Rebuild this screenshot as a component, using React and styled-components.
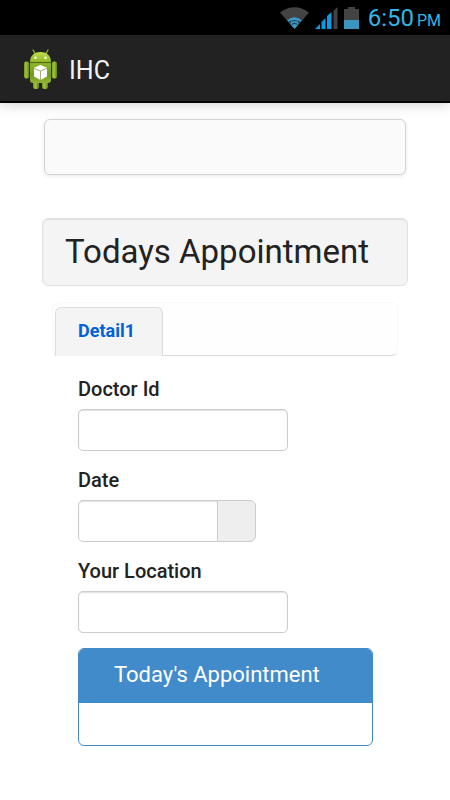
import React from 'react';
import styled, { createGlobalStyle } from 'styled-components';

const GlobalStyle = createGlobalStyle`
  *, *::before, *::after {
    box-sizing: border-box;
  }

  body {
    margin: 0;
    background-color: #fff;
    color: #222;
    font-family: Roboto, "Liberation Sans", sans-serif;
  }
`;

const StatusBar = styled.div`
  display: flex;
  justify-content: flex-end;
  align-items: center;
  gap: 6px;
  height: 35px;
  padding: 0 9px 0 0;
  background-color: #000;
  color: #33b5e5;
`;

const Clock = styled.time`
  display: flex;
  align-items: baseline;
  gap: 3px;
  margin-left: 3px;
  padding-top: 4px;
  font-size: 24px;
  line-height: 32px;
`;

const Meridiem = styled.span`
  font-size: 16px;
`;

const ActionBar = styled.header`
  display: flex;
  align-items: center;
  gap: 11px;
  height: 68px;
  padding: 3px 23px 0;
  background-color: #222;
  border-bottom: 2px solid #000;
  box-shadow: 0 2px 12px rgba(0, 0, 0, 0.18);
`;

const AppTitle = styled.h1`
  margin: 0;
  padding-top: 2px;
  color: #f3f3f3;
  font-size: 25px;
  font-weight: 400;
  line-height: 32px;
`;

const Page = styled.main`
  padding: 16px 42px;
`;

const Navbar = styled.nav`
  height: 56px;
  margin: 0 2px 43px;
  background-color: #fafafa;
  border: 1px solid #d4d4d4;
  border-radius: 6px;
  box-shadow: 0 1px 4px rgba(0, 0, 0, 0.1);
`;

const Well = styled.div`
  margin-bottom: 16px;
  padding: 11px 22px;
  background-color: #f4f4f4;
  border: 1px solid #e1e1e1;
  border-radius: 6px;
  box-shadow: inset 0 1px 1px rgba(0, 0, 0, 0.08);
`;

const Heading = styled.h2`
  margin: 0;
  font-size: 33px;
  font-weight: 400;
  line-height: 44px;
  white-space: nowrap;
`;

const TabPane = styled.section`
  margin: 0 10px;
`;

const TabList = styled.div`
  display: flex;
  padding: 4px 2px 0;
  background-color: #fefefe;
  border: 1px solid;
  border-color: #fafafa #f8f8f8 #d9d9d9;
  border-radius: 7px;
`;

const Tab = styled.button`
  height: 49px;
  margin-bottom: -1px;
  padding: 0 27px 4px 22px;
  background-color: #f4f4f4;
  border: 1px solid #ddd;
  border-bottom: 0;
  border-radius: 6px 6px 0 0;
  color: #0062d6;
  font-family: inherit;
  font-size: 18px;
  font-weight: 700;
`;

const Form = styled.form`
  padding: 20px 25px 0 26px;
`;

const Field = styled.div`
  margin-bottom: 16px;

  &:last-of-type {
    margin-bottom: 15px;
  }
`;

const Label = styled.label`
  display: block;
  margin-bottom: 7px;
  color: #222;
  font-size: 20px;
  font-weight: 500;
  line-height: 26px;
`;

const TextInput = styled.input`
  display: block;
  width: ${({ $width }) => $width};
  height: 42px;
  padding: 6px 8px;
  background-color: #fff;
  border: 1px solid #ccc;
  border-radius: ${({ $grouped }) => ($grouped ? '5px 0 0 5px' : '5px')};
  box-shadow: inset 0 1px 1px rgba(0, 0, 0, 0.12);
  font: inherit;
  font-size: 19px;
`;

const InputGroup = styled.div`
  display: flex;
`;

const DateButton = styled.button`
  width: 39px;
  height: 42px;
  margin-left: -1px;
  padding: 0;
  background-color: #eee;
  border: 1px solid #ccc;
  border-radius: 0 6px 6px 0;
`;

const Panel = styled.section`
  border: 1px solid #428bca;
  border-radius: 6px;
  overflow: hidden;
`;

const PanelTitle = styled.h3`
  margin: 0;
  padding: 12px 35px 14px;
  background-color: #428bca;
  color: #fff;
  font-size: 22px;
  font-weight: 400;
  line-height: 28px;
  white-space: nowrap;
`;

const PanelBody = styled.div`
  height: 42px;
`;

const WifiIcon = () => (
  <svg width="29" height="22" viewBox="0 0 29 22" aria-hidden="true">
    <path d="M0 5.5 Q14.5 -5 29 5.5 L14.5 22 Z" fill="#434343" />
    <path d="M7.2 13.2 Q14.5 7.4 21.8 13.2 L14.5 22 Z" fill="#3b9bc6" />
    <path d="M8.5 14.6 L11.5 13.2 L10.5 16.8 Z M20.5 14.6 L17.5 13.2 L18.5 16.8 Z" fill="#17495f" />
    <path d="M11.8 14.2 Q14.5 12.8 17.2 14.2" fill="none" stroke="#17495f" strokeWidth="1.2" />
    <path d="M11.8 17.4 L14.5 16.2 L17.2 17.4" fill="none" stroke="#17495f" strokeWidth="1.2" />
  </svg>
);

const SignalIcon = () => (
  <svg width="23" height="22" viewBox="0 0 23 22" aria-hidden="true">
    <path d="M0 22 L5 17 V22 Z" fill="#0a9be6" />
    <path d="M6.5 22 V15 L10.5 11 V22 Z" fill="#0a9be6" />
    <path d="M12 22 V9 L16.5 5 V22 Z" fill="#0a9be6" />
    <path d="M18.5 22 V4 L22.5 0 V22 Z" fill="#434343" />
  </svg>
);

const BatteryIcon = () => (
  <svg width="15" height="22" viewBox="0 0 15 22" aria-hidden="true">
    <path d="M0 2 H4 V0 H11 V2 H15 V13 H0 Z" fill="#434343" />
    <path d="M0 13 H15 V22 H0 Z" fill="#3b96bf" />
  </svg>
);

const AndroidIcon = () => (
  <svg width="35" height="41" viewBox="0 0 35 41" aria-hidden="true">
    <defs>
      <linearGradient id="head" x1="0" y1="0" x2="0" y2="1">
        <stop offset="0" stopColor="#c3df4b" />
        <stop offset="1" stopColor="#8fb626" />
      </linearGradient>
      <linearGradient id="body" x1="0" y1="0" x2="0" y2="1">
        <stop offset="0" stopColor="#8fb52a" />
        <stop offset="0.6" stopColor="#739720" />
        <stop offset="1" stopColor="#93b636" />
      </linearGradient>
      <linearGradient id="limb" x1="0" y1="0" x2="1" y2="0">
        <stop offset="0" stopColor="#6f9420" />
        <stop offset="0.4" stopColor="#a3c639" />
        <stop offset="1" stopColor="#5f8018" />
      </linearGradient>
    </defs>
    <path d="M12 4.5 L10 1 M23 4.5 L25 1" stroke="#8fb52a" strokeWidth="1.3" strokeLinecap="round" />
    <rect x="10" y="29" width="6" height="11" rx="2.5" fill="url(#limb)" />
    <rect x="19" y="29" width="6" height="11" rx="2.5" fill="url(#limb)" />
    <rect x="1" y="12.5" width="5.2" height="17" rx="2" fill="url(#limb)" />
    <rect x="28.8" y="12.5" width="5.2" height="17" rx="2" fill="url(#limb)" />
    <path d="M7 13 C7 6 12 3 17.5 3 C23 3 28 6 28 13 Z" fill="url(#head)" />
    <path d="M7 14 H28 V31 Q28 34 25 34 H10 Q7 34 7 31 Z" fill="url(#body)" />
    <path d="M7 13.6 H28" stroke="#53701a" strokeWidth="1" />
    <circle cx="12.5" cy="8.8" r="1.2" fill="#fff" />
    <circle cx="22.5" cy="8.8" r="1.2" fill="#fff" />
    <path d="M17.5 16 L24 18.8 V27.6 L17.5 31 L11 27.6 V18.8 Z" fill="#fff" />
    <path d="M11 19.3 L17.5 22 L24 19.3 M17.5 22 V31" fill="none" stroke="#93ad5c" strokeWidth="0.9" />
  </svg>
);

const FormField = ({ id, label, children }) => (
  <Field>
    <Label htmlFor={id}>{label}</Label>
    {children}
  </Field>
);

const App = () => {
  return (
    <>
      <GlobalStyle />
      <StatusBar>
        <WifiIcon />
        <SignalIcon />
        <BatteryIcon />
        <Clock>
          6:50 <Meridiem>PM</Meridiem>
        </Clock>
      </StatusBar>
      <ActionBar>
        <AndroidIcon />
        <AppTitle>IHC</AppTitle>
      </ActionBar>
      <Page>
        <Navbar />
        <Well>
          <Heading>Todays Appointment</Heading>
        </Well>
        <TabPane>
          <TabList role="tablist">
            <Tab type="button" role="tab" aria-selected="true">
              Detail1
            </Tab>
          </TabList>
          <Form>
            <FormField id="doctorId" label="Doctor Id">
              <TextInput id="doctorId" type="text" $width="210px" />
            </FormField>
            <FormField id="date" label="Date">
              <InputGroup>
                <TextInput id="date" type="text" $width="140px" $grouped />
                <DateButton type="button" aria-label="Choose date" />
              </InputGroup>
            </FormField>
            <FormField id="location" label="Your Location">
              <TextInput id="location" type="text" $width="210px" />
            </FormField>
            <Panel>
              <PanelTitle>Today's Appointment</PanelTitle>
              <PanelBody />
            </Panel>
          </Form>
        </TabPane>
      </Page>
    </>
  );
};

export default App;
